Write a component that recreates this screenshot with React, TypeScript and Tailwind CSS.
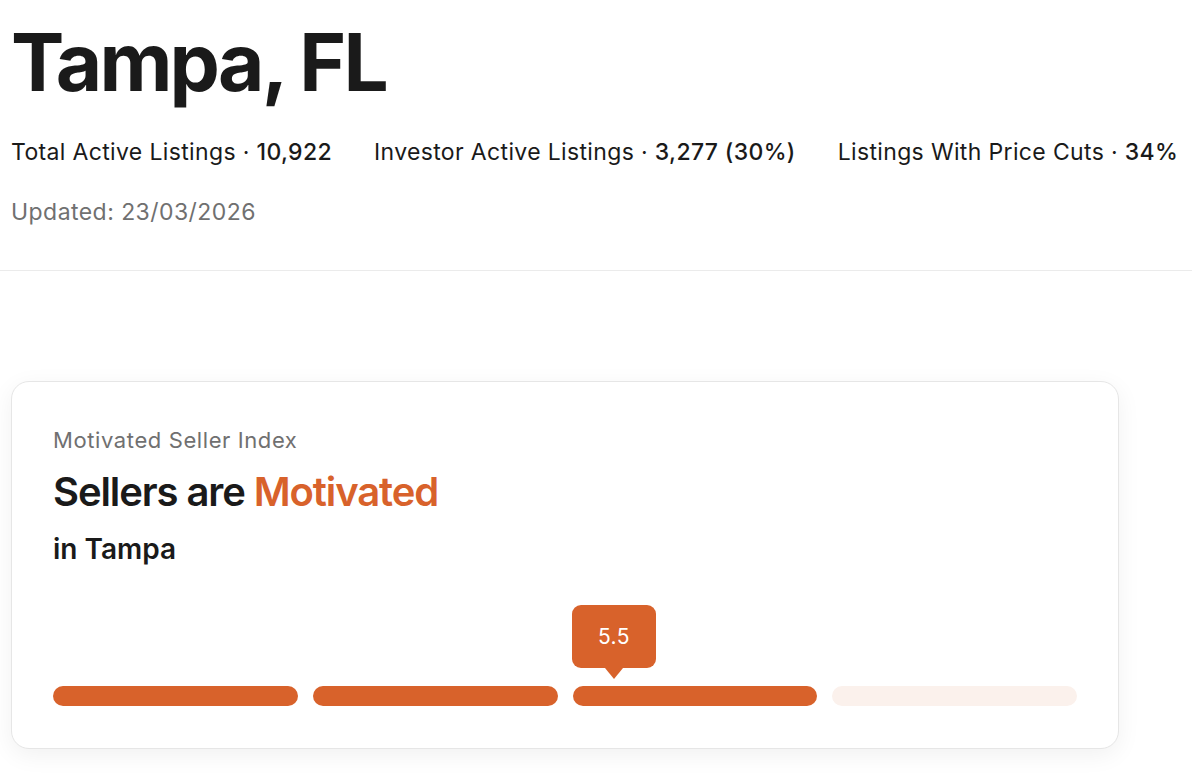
const STATS = [
  { label: "Total Active Listings", value: "10,922" },
  { label: "Investor Active Listings", value: "3,277 (30%)" },
  { label: "Listings With Price Cuts", value: "34%" },
];

const SEGMENTS = [true, true, true, false];

function IndexBar() {
  return (
    <div className="relative mt-[120px]">
      {/* Score tooltip */}
      <div className="absolute left-[519px] top-[-81px] flex flex-col items-center">
        <div className="flex h-[63px] w-[84px] items-center justify-center rounded-[9px] bg-[#d8622b] text-[21px] tracking-[0.5px] text-white">
          5.5
        </div>
        <div className="h-0 w-0 border-x-[9px] border-t-[11px] border-x-transparent border-t-[#d8622b]" />
      </div>

      <div className="flex gap-[15px]">
        {SEGMENTS.map((filled, i) => (
          <div
            key={i}
            className={
              filled
                ? "h-[20px] flex-1 rounded-full bg-[#d8622b]"
                : "h-[20px] flex-1 rounded-full bg-[#fbf1ec]"
            }
          />
        ))}
      </div>
    </div>
  );
}

export default function App() {
  return (
    <div
      className="min-h-[780px] bg-white text-[#1a1a1a]"
      style={{ fontFamily: "Inter, 'Noto Sans', sans-serif" }}
    >
      {/* Header */}
      <header className="border-b border-[#ebebeb] px-[11px] pt-[14px] pb-[43px]">
        <h1 className="text-[80px] font-bold leading-[96px] tracking-[-2.8px]">
          Tampa, FL
        </h1>

        <div className="mt-[27px] flex gap-[42px] text-[23px] leading-[30px] tracking-[0.35px]">
          {STATS.map((stat) => (
            <p key={stat.label}>
              {stat.label} · <span className="font-medium">{stat.value}</span>
            </p>
          ))}
        </div>

        <p className="mt-[30px] text-[23px] leading-[30px] tracking-[0.45px] text-[#707070]">
          Updated: 23/03/2026
        </p>
      </header>

      {/* Motivated seller card */}
      <section className="px-[11px] pt-[110px]">
        <div className="w-[1108px] rounded-[18px] border border-[#e6e6e6] bg-white px-[41px] pt-[44px] pb-[42px] shadow-[0_6px_24px_rgba(0,0,0,0.06)]">
          <p className="text-[22px] leading-[28px] tracking-[0.6px] text-[#707070]">
            Motivated Seller Index
          </p>
          <h2 className="mt-[14px] text-[40px] font-semibold leading-[48px] tracking-[-1.1px]">
            Sellers are <span className="text-[#d8622b]">Motivated</span>
          </h2>
          <p className="mt-[16px] text-[28px] font-semibold leading-[34px]">
            in Tampa
          </p>

          <IndexBar />
        </div>
      </section>
    </div>
  );
}
